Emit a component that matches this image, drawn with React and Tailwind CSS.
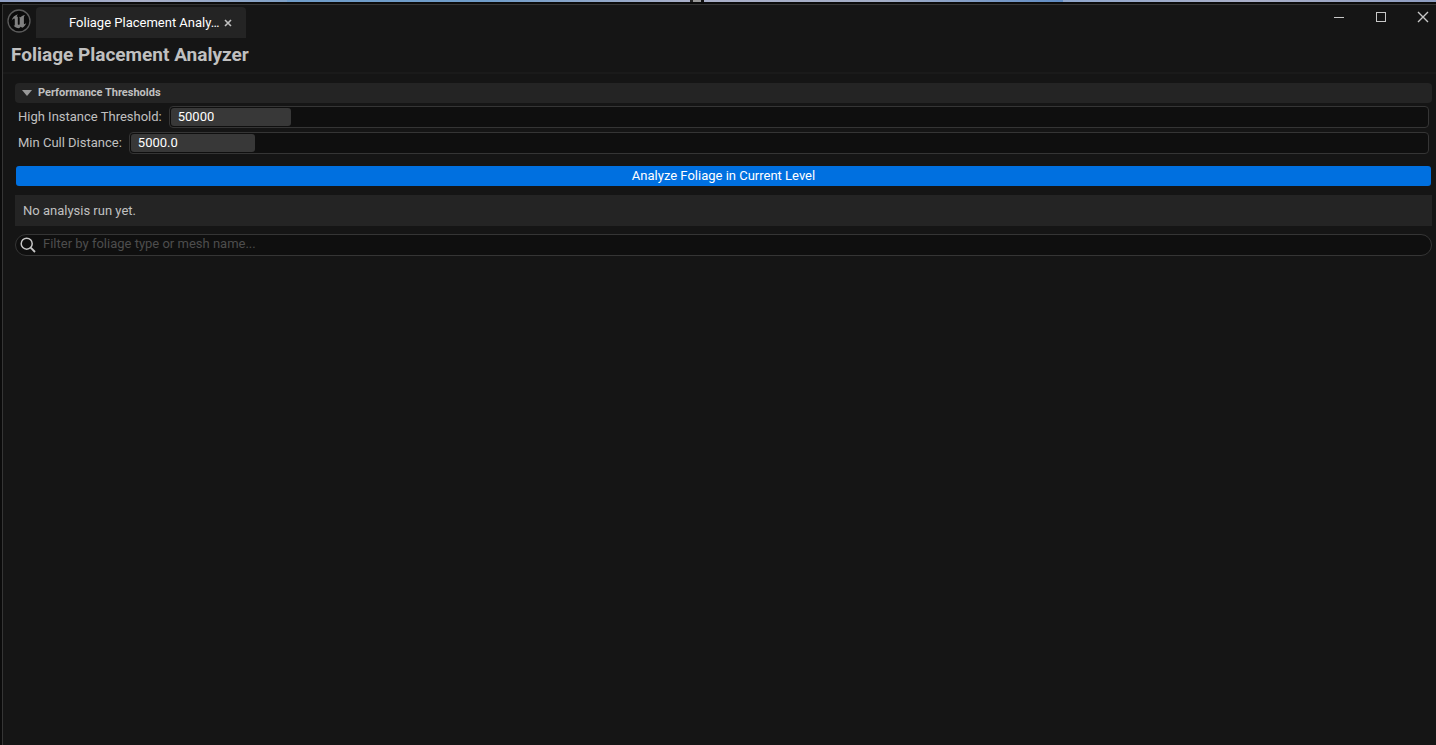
import { useState } from "react";

const WindowButton = ({ label, children }) => (
  <button type="button" aria-label={label} className="flex h-6 w-[42px] items-center justify-center text-[#c8c8c8]">
    <svg width="12" height="12" viewBox="0 0 12 12" fill="none" stroke="currentColor">
      {children}
    </svg>
  </button>
);

const UnrealLogo = () => (
  <svg width="24" height="24" viewBox="0 0 24 24" aria-hidden="true">
    <circle cx="12" cy="12" r="11" fill="#0b0b0b" stroke="#5c5c5c" strokeWidth="1.3" />
    <path
      d="M11 5.200C7.800 6 5.200 8.500 4.600 11.800c1-1.500 1.900-2.200 2.500-2.200.5 0 .7.300.7.900v5.200c0 .8-.4 1.100-1.200.9 1.300 1.700 3.200 2.700 5.400 2.700l1.800-1.600 1.400 1.100c2-.9 3.500-2.600 4-4.700-.7.800-1.300 1.100-1.700 1.100-.4 0-.6-.3-.6-.8V8.600c0-1.200.5-2.100 1.500-2.900-2.100.4-3.800 1.300-5 2.600-.4-.4-.8-.6-1.400-.6.5.4.700.8.700 1.500v6c-.3.400-.7.600-1.100.600-.6 0-.8-.4-.8-1.100V7.500l-.9.500c-.2-.9.100-1.900 1.100-2.800z"
      fill="#808080"
    />
  </svg>
);

const SpinBox = ({ id, label, defaultValue, percent }) => {
  const [value, setValue] = useState(defaultValue);

  return (
    <div className="flex items-center gap-[7px] px-[3px]">
      <label htmlFor={id} className="whitespace-nowrap text-[#c0c0c0]">
        {label}
      </label>
      <div className="relative h-[22px] min-w-0 flex-1 rounded border border-[#353535] bg-[#0f0f0f] p-px">
        <div className="h-full rounded-[3px] bg-[#383838]" style={{ width: `${percent}%` }} />
        <input
          id={id}
          type="text"
          inputMode="decimal"
          value={value}
          onChange={(e) => setValue(e.target.value)}
          className="absolute inset-0 w-full bg-transparent px-2 pb-px text-white outline-none"
        />
      </div>
    </div>
  );
};

const TitleBar = () => (
  <header className="flex items-start">
    <div className="pt-1 pr-[5px] pl-1">
      <UnrealLogo />
    </div>
    <div className="mt-[2px] flex h-[31px] w-[210px] items-center rounded-t bg-[#242424] pr-3 pl-[33px] text-white">
      <span className="min-w-0 flex-1 whitespace-nowrap">Foliage Placement Analy…</span>
      <button type="button" aria-label="Close tab" className="flex size-3 items-center justify-center text-[#c0c0c0]">
        <svg width="8" height="8" viewBox="0 0 8 8" stroke="currentColor" strokeWidth="1.6">
          <path d="M1 1l6 6M7 1L1 7" />
        </svg>
      </button>
    </div>
    <div className="-mr-2 ml-auto flex">
      <WindowButton label="Minimize">
        <path d="M1 6.500h10" />
      </WindowButton>
      <WindowButton label="Maximize">
        <rect x="1.500" y="1.500" width="9" height="9" />
      </WindowButton>
      <WindowButton label="Close">
        <path d="M1 1l10 10M11 1L1 11" strokeWidth="1.400" />
      </WindowButton>
    </div>
  </header>
);

export default function App() {
  const [open, setOpen] = useState(true);

  return (
    <div className="flex min-h-screen flex-col overflow-hidden bg-[#0b0b0b] pl-[2px] font-['Roboto','Liberation_Sans',sans-serif] text-[13px] leading-4">
      <div className="-ml-[2px] flex h-[2px]">
        <div className="w-1/5 bg-gradient-to-r from-[#8f9fc4] via-[#a9afc8] to-[#7fa0c6]" />
        <div className="flex-1 bg-gradient-to-r from-[#6f9cc8] via-[#6f9cc8] to-[#a9afc8]" />
        <div className="w-[3px] bg-[#222222]" />
        <div className="w-2 bg-[#999999]" />
        <div className="w-[3px] bg-[#111111]" />
        <div className="w-1/4 bg-gradient-to-r from-[#a9afc8] via-[#a3adc6] to-[#5f8cc4]" />
        <div className="w-[26%] bg-gradient-to-r from-[#8fa6cc] via-[#a9afc8] to-[#8d9cc0]" />
      </div>
      <div className="mt-[2px] flex flex-1 flex-col border-t border-l border-[#353535] bg-[#151515]">
        <TitleBar />
        <h1 className="border-b-2 border-[#1a1a1a] px-2 pt-[5px] pb-[5px] text-[19px] leading-6 font-bold text-[#c0c0c0]">
          Foliage Placement Analyzer
        </h1>

        <main className="flex flex-col pt-[9px] pr-1 pl-3">
          <button
            type="button"
            aria-expanded={open}
            onClick={() => setOpen(!open)}
            className="flex h-5 items-center gap-[6px] rounded bg-[#242424] px-[7px] text-[11px] font-bold text-[#c0c0c0]"
          >
            <svg width="10" height="6" viewBox="0 0 10 6" className={open ? "" : "-rotate-90"} fill="#9a9a9a">
              <path d="M0 0h10L5 6z" />
            </svg>
            Performance Thresholds
          </button>

          {open && (
            <div className="flex flex-col gap-1 pt-[3px]">
              <SpinBox id="instances" label="High Instance Threshold:" defaultValue="50000" percent={9.6} />
              <SpinBox id="cull" label="Min Cull Distance:" defaultValue="5000.0" percent={9.6} />
            </div>
          )}

          <button type="button" className="mx-px mt-3 h-5 rounded-[3px] bg-[#0070e0] text-white">
            Analyze Foliage in Current Level
          </button>

          <p className="mt-[9px] bg-[#242424] px-2 pt-2 pb-[7px] text-[#c0c0c0]">No analysis run yet.</p>

          <label className="mt-2 flex h-[22px] items-center gap-[7px] rounded-full border border-[#353535] bg-[#0f0f0f] px-1">
            <svg width="16" height="16" viewBox="0 0 16 16" fill="none" stroke="#c8c8c8" strokeWidth="1.500">
              <circle cx="6.700" cy="6.700" r="5.500" />
              <path d="M10.700 10.700l4.300 4.300" strokeWidth="1.800" />
            </svg>
            <input
              type="text"
              aria-label="Filter foliage"
              placeholder="Filter by foliage type or mesh name..."
              className="min-w-0 flex-1 bg-transparent pb-[2px] text-[#c0c0c0] outline-none placeholder:text-[#4d4d4d]"
            />
          </label>
        </main>
      </div>
    </div>
  );
}
